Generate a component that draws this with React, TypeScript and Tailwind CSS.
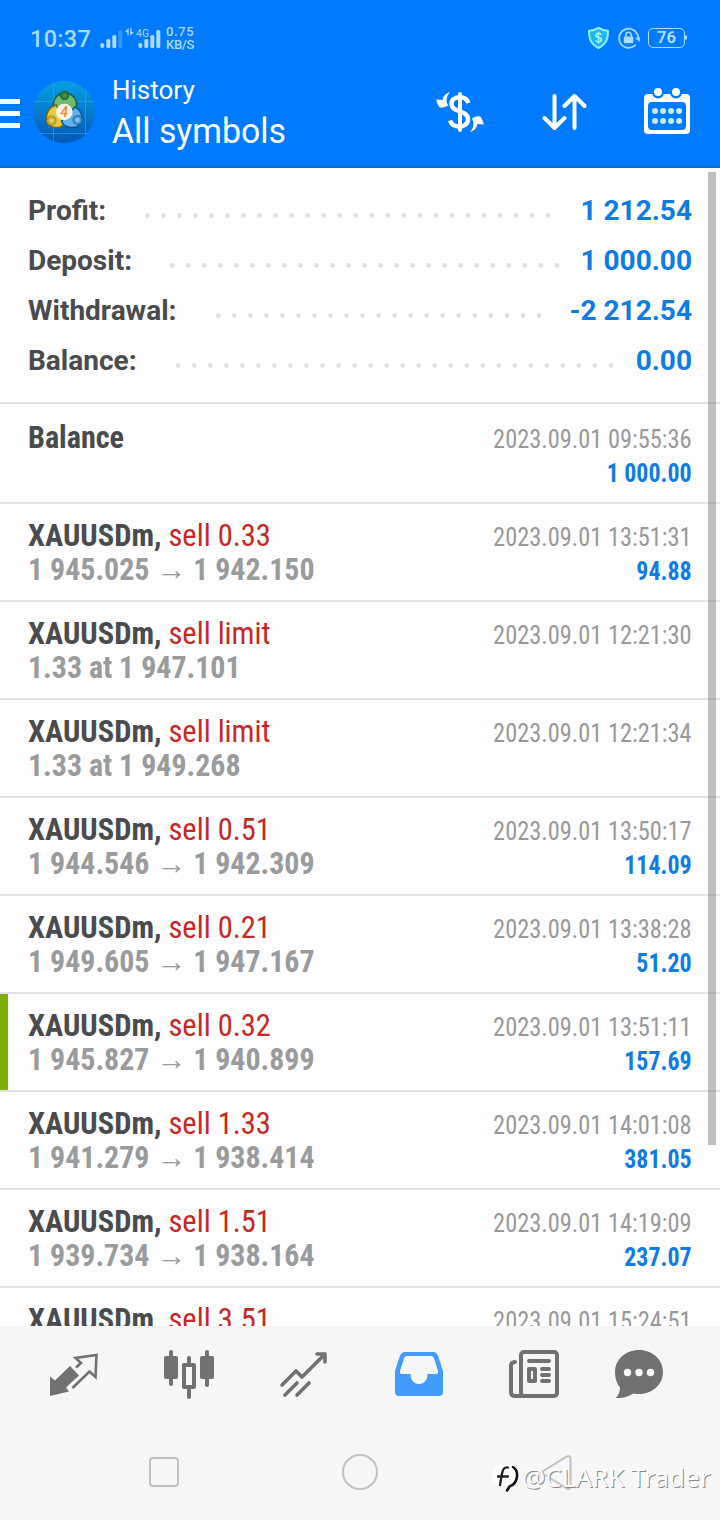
import React from "react";

const COND = "font-['Roboto_Condensed','Roboto',sans-serif] [font-stretch:75%]";

const summary = [
  { label: "Profit:", value: "1 212.54", start: 145, count: 26 },
  { label: "Deposit:", value: "1 000.00", start: 170, count: 25 },
  { label: "Withdrawal:", value: "-2 212.54", start: 216, count: 21 },
  { label: "Balance:", value: "0.00", start: 176, count: 28 },
];

type Deal = { side: string; detail: string; time: string; profit?: string; mark?: boolean };

const deals: Deal[] = [
  { side: "sell 0.33", detail: "1 945.025 → 1 942.150", time: "2023.09.01 13:51:31", profit: "94.88" },
  { side: "sell limit", detail: "1.33 at 1 947.101", time: "2023.09.01 12:21:30" },
  { side: "sell limit", detail: "1.33 at 1 949.268", time: "2023.09.01 12:21:34" },
  { side: "sell 0.51", detail: "1 944.546 → 1 942.309", time: "2023.09.01 13:50:17", profit: "114.09" },
  { side: "sell 0.21", detail: "1 949.605 → 1 947.167", time: "2023.09.01 13:38:28", profit: "51.20" },
  { side: "sell 0.32", detail: "1 945.827 → 1 940.899", time: "2023.09.01 13:51:11", profit: "157.69", mark: true },
  { side: "sell 1.33", detail: "1 941.279 → 1 938.414", time: "2023.09.01 14:01:08", profit: "381.05" },
  { side: "sell 1.51", detail: "1 939.734 → 1 938.164", time: "2023.09.01 14:19:09", profit: "237.07" },
  { side: "sell 3.51", detail: "", time: "2023.09.01 15:24:51" },
];

function StatusBar() {
  return (
    <div className="flex h-[60px] items-start pt-[22px] text-[#a9dcff]">
      <span className="mt-[5px] ml-[30px] w-[70px] text-[23.5px] leading-6 font-medium tracking-[0.3px]">10:37</span>
      <svg className="mt-[4px] h-[26px] w-[62px]" viewBox="0 0 62 26" fill="#a9dcff">
        <rect x="0.3" y="17" width="4" height="5" rx="2" />
        <rect x="6.3" y="13" width="4" height="9" rx="1.5" />
        <rect x="12.3" y="9" width="4" height="13" rx="1.5" />
        <rect x="18.3" y="4" width="4" height="18" rx="1.5" opacity="0.3" />
        <path d="M25 5.500 28.600 2.200v7.300h-1.200V6.500zM33.800 6.500 30.200 9.500V2.200h1.200v3.300z" />
        <rect x="38.300" y="17" width="4" height="5" rx="2" />
        <rect x="44.300" y="13" width="4" height="9" rx="1.500" />
        <rect x="50.300" y="9" width="4" height="13" rx="1.500" />
        <rect x="56.300" y="4" width="4" height="18" rx="1.500" />
        <text x="36" y="11" fontSize="10.500" fontFamily="Roboto">4G</text>
      </svg>
      <div className="mt-[4px] ml-[4px] text-[13px] leading-[12.500px] font-medium">
        <div className="tracking-[0.6px]">0.75</div>
        <div className="tracking-[-0.3px]">KB/S</div>
      </div>
      <div className="mt-[4px] mr-[33px] ml-auto flex items-start">
        <svg className="h-6 w-[23px]" viewBox="0 0 23 24">
          <path d="M11.500 1.800c3 2 6 2.900 9.500 2.900 0 8-1.500 13.500-9.500 17.300C3.500 18.200 2 12.700 2 4.700c3.500 0 6.500-.9 9.500-2.900z" fill="#20b4f0" stroke="#8ff0f4" strokeWidth="2" strokeLinejoin="round" />
          <path d="M14.300 8.700c-.6-1-1.600-1.400-2.800-1.400-3.800 0-3.600 4 0 4.200 3.800.2 3.800 4.400 0 4.400-1.400 0-2.500-.6-3-1.600M11.500 5.800v11.700" fill="none" stroke="#a8fbff" strokeWidth="1.400" />
        </svg>
        <svg className="ml-[7px] h-6 w-6" viewBox="0 0 24 24" fill="none" stroke="#a9dcff" strokeWidth="1.700">
          <path d="M17.500 19.900A9.600 9.600 0 1 1 21.200 11M17.500 19.900l1.300-1.200" />
          <path d="m18 12 4.800-1v5z" fill="#a9dcff" stroke="none" />
          <rect x="6.800" y="10.500" width="9.500" height="6.800" rx="1" fill="#a9dcff" stroke="none" />
          <path d="M8.800 10.500V9a2.750 2.750 0 0 1 5.500 0v1.500" />
        </svg>
        <div className="mt-[2px] ml-[7px] flex h-5 w-[37px] items-center justify-center rounded-[5px] border border-[#a9dcff] text-[16.5px] leading-[18px] font-bold">76</div>
        <div className="mt-[9px] h-[5px] w-[2px] rounded-r bg-[#a9dcff]" />
      </div>
    </div>
  );
}

function AppLogo() {
  return (
    <svg className="h-16 w-16" viewBox="0 0 64 64">
      <defs>
        <linearGradient id="disc" x1="0" y1="0" x2="0" y2="1">
          <stop offset="0" stopColor="#089fe3" />
          <stop offset="1" stopColor="#0457b8" />
        </linearGradient>
        <radialGradient id="green"><stop offset="0" stopColor="#4f9f52" /><stop offset="1" stopColor="#17672f" /></radialGradient>
        <radialGradient id="gold"><stop offset="0" stopColor="#f7e77a" /><stop offset="1" stopColor="#a88a10" /></radialGradient>
        <radialGradient id="blue"><stop offset="0" stopColor="#9fe0ff" /><stop offset="1" stopColor="#1468b8" /></radialGradient>
      </defs>
      <circle cx="32" cy="32" r="31" fill="url(#disc)" />
      <path d="M21.500 3v58M53.500 9v46M2 21.500h60M8 53.500h48" stroke="#38a6e6" strokeWidth="1" opacity="0.6" />
      <path d="M33 13c7 0 12 6 11.500 12 -.5 6-5 9-11.500 9s-11-3-11.500-9C21 19 26 13 33 13z" fill="#6fbb72" stroke="#1a6238" strokeWidth="1.500" />
      <path d="M24 25c-7 2-10 8-9.500 14 .5 5 4.500 8.500 10 8.500 5 0 8-2.500 8-6.500z" fill="#e3cb42" stroke="#77681c" strokeWidth="1.500" />
      <path d="M43 27c5 2 8 8 6.500 14-1.500 5-6 7-11 6.500-5-.5-8-3-9-6.500z" fill="#5eb2e8" stroke="#125293" strokeWidth="1.500" />
      <circle cx="32.500" cy="15.500" r="4.700" fill="url(#green)" />
      <circle cx="19.500" cy="40.500" r="5" fill="url(#gold)" />
      <circle cx="45.500" cy="40" r="5" fill="url(#blue)" />
      <circle cx="32.300" cy="32" r="8.300" fill="#f7f4ec" />
      <text x="32" y="37" textAnchor="middle" fontSize="14" fontWeight="500" fontStyle="italic" fontFamily="Roboto" fill="#ef8838">4</text>
    </svg>
  );
}

function Header() {
  return (
    <header className="h-[168px] shrink-0 border-b-2 border-[#0c6fc8] bg-[#007aff]">
      <StatusBar />
      <div className="flex items-start">
        <div className="mt-[39px] flex w-5 flex-col gap-[7px]">
          <div className="h-[5px] bg-white" />
          <div className="h-[5px] bg-white" />
          <div className="h-[5px] bg-white" />
        </div>
        <div className="mt-5 ml-3"><AppLogo /></div>
        <div className="mt-[14px] ml-4 text-white">
          <div className="text-[26px] leading-[32px]">History</div>
          <div className="mt-[4px] origin-left scale-x-[0.98] text-[34.5px] leading-[42px]">All symbols</div>
        </div>
        <div className="mt-[28px] mr-[29px] ml-auto flex items-start">
          <svg className="h-[48px] w-[48px]" viewBox="0 0 48 48" fill="none">
            <path d="M32.500 15c-1.500-4-4.500-5.700-8.500-5.700-5 0-8.500 2.700-8.500 6.500 0 9.500 16.500 5.500 16.500 15.500 0 4.500-3.500 7.300-8.500 7.300-4.500 0-8-1.800-9.500-6" stroke="#fff" strokeWidth="4.500" />
            <path d="M24 6v36" stroke="#fff" strokeWidth="4" strokeLinecap="round" />
            <path d="M14 4C9.500 5.500 7 8 6.500 12L.3 11.500C1 15 2 17.500 3.800 19.500c3 .5 5.500-.3 8.200-2L10.500 13.500C10.500 9.500 11.500 7 14 4z" fill="#fff" />
            <path d="M34 44c4.500-1.500 7-4 7.500-8l6.200.5c-.7-3.500-1.700-6-3.500-8-3-.5-5.500.3-8.200 2l1.500 4c0 4-1 6.500-3.500 9.500z" fill="#fff" />
          </svg>
          <svg className="ml-[58px] h-[48px] w-[46px]" viewBox="0 0 46 48" fill="none" stroke="#fff" strokeWidth="4" strokeLinecap="round" strokeLinejoin="round">
            <path d="M12.500 8v32M2.500 30l10 10 10-10M32.500 40V8M22.500 18l10-10 10 10" />
          </svg>
          <svg className="ml-[55px] h-[48px] w-[48px]" viewBox="0 0 48 48">
            <rect x="1" y="6" width="46" height="40" rx="4" fill="#fff" />
            <rect x="5" y="14" width="38" height="28" rx="4" fill="#007aff" />
            <circle cx="15" cy="4.500" r="6" fill="#007aff" />
            <circle cx="33" cy="4.500" r="6" fill="#007aff" />
            <circle cx="15" cy="4" r="4" fill="#fff" />
            <circle cx="33" cy="4" r="4" fill="#fff" />
            {[12, 20, 28, 36].map((x) => [23, 33].map((y) => <circle key={`${x}-${y}`} cx={x} cy={y} r="3" fill="#c4ecff" />))}
          </svg>
        </div>
      </div>
    </header>
  );
}

function Dots({ count }: { count: number }) {
  return (
    <svg className="mt-[8px] h-[5px]" width={count * 16.03} height="5">
      {Array.from({ length: count }, (_, i) => (
        <circle key={i} cx={2.3 + i * 16.03} cy="2.500" r="2.400" fill="#e0e0e0" />
      ))}
    </svg>
  );
}

function DealRow({ deal }: { deal: Deal }) {
  return (
    <div className={`flex h-[98px] shrink-0 border-b-2 border-[#e2e2e2] ${COND}`}>
      <div className={deal.mark ? "w-2 bg-[#7fb00a]" : "w-2"} />
      <div className="ml-5 pt-[14px] text-[32px] leading-[34px] font-bold whitespace-pre">
        <div className="origin-left scale-x-[0.952] text-[#4a4b4d]">XAUUSDm, <span className="font-normal text-[#c62828]">{deal.side}</span></div>
        <div className="origin-left scale-x-[0.935] text-[#999b9c]">{deal.detail}</div>
      </div>
      <div className="mr-7 ml-auto pt-[16px] text-right text-[26px] leading-[34px]">
        <div className="origin-right scale-x-[0.938] text-[#999]">{deal.time}</div>
        <div className="origin-right scale-x-[0.918] font-bold text-[#0f7be3]">{deal.profit}</div>
      </div>
    </div>
  );
}

function TabBar() {
  return (
    <nav className="flex h-[98px] items-start bg-[#f6f6f6] pt-6 pl-[49px]">
      <svg className="h-[48px] w-[50px]" viewBox="0 0 50 48">
        <path d="M21 16 30 25.500 17 37.500 20 41.500 1 46V26.500l5 4z" fill="#717171" />
        <path d="m27 17.500 5-4.500-5.500-5L47.500 5 46.500 27l-6-5.500L23.500 38" fill="none" stroke="#717171" strokeWidth="2.600" />
      </svg>
      <svg className="ml-[64px] h-[50px] w-[52px]" viewBox="0 0 52 50" fill="#717171">
        <rect x="1" y="6" width="14" height="23" rx="2" /><rect x="6" y="0" width="4" height="36" rx="2" />
        <rect x="37" y="6" width="14" height="23" rx="2" /><rect x="42" y="0" width="4" height="37" rx="2" />
        <rect x="24" y="6" width="4" height="43" rx="2" /><rect x="19" y="13" width="14" height="26" rx="2" />
        <rect x="23" y="17" width="6" height="18" fill="#f5f6f6" />
      </svg>
      <svg className="ml-[64px] h-[48px] w-[50px]" viewBox="0 0 50 48" fill="none" stroke="#717171" strokeWidth="3.600" strokeLinecap="round" strokeLinejoin="round">
        <path d="M3 35 17 21l6 6L46 4M38 4h8v8M6 45l12-12M18 45l12-12" />
      </svg>
      <svg className="ml-[65px] h-[48px] w-[50px]" viewBox="0 0 50 48">
        <path d="M11 2h28c3 0 4.500 2 5.500 5L49 21v21c0 2.500-1.500 4-4 4H5c-2.500 0-4-1.500-4-4V21L5.500 7C6.500 4 8 2 11 2z" fill="#439bfc" />
        <path d="M13 6h24c1.500 0 2.300.7 3 2.500L44 21c.3 2-.3 3-2 3h-8.500c0 5.500-3 10-8.500 10s-8.500-4.500-8.500-10H8c-1.700 0-2.300-1-2-3l4-12.500C10.700 6.700 11.500 6 13 6z" fill="#f7f7f7" />
      </svg>
      <svg className="ml-[64px] h-[48px] w-[52px]" viewBox="0 0 52 48" fill="none" stroke="#717171" strokeWidth="4" strokeLinecap="round">
        <rect x="13" y="2" width="36" height="44" rx="3" />
        <path d="M7 12c-2.500 0-4 1.500-4 4v26c0 2.500 1.500 4 4 4h10M21 11h20M34 19h7M34 25h7M34 31h7" />
        <rect x="21" y="19" width="6" height="12" strokeLinejoin="round" />
      </svg>
      <svg className="ml-[54px] h-[48px] w-[50px]" viewBox="0 0 50 48">
        <path d="M25 0c13.500 0 24 9.600 24 22S38.500 44 25 44c-2 0-3.800-.2-5.500-.6C14 47 8 48 1.500 48 4.500 45.500 6 42 6 37.500 2.500 33.500 1 28 1 22 1 9.600 11.500 0 25 0z" fill="#717171" />
        <circle cx="13.500" cy="22.500" r="3.700" fill="#f7f7f7" /><circle cx="25" cy="22.500" r="3.700" fill="#f7f7f7" /><circle cx="36.500" cy="22.500" r="3.700" fill="#f7f7f7" />
      </svg>
    </nav>
  );
}

export default function App() {
  return (
    <div className="flex h-[1520px] w-[720px] flex-col overflow-hidden bg-white font-['Roboto',sans-serif]">
      <Header />
      <main className="relative h-[1158px] shrink-0 overflow-hidden bg-[#fefefe]">
        <section className="h-[236px] border-b-2 border-[#e2e2e2] pt-[18px]">
          {summary.map((row) => (
            <div key={row.label} className="flex h-[50px] items-center text-[28px] leading-[50px] font-bold">
              <span className="pl-7 text-[#4a4b4d]" style={{ width: row.start }}>{row.label}</span>
              <Dots count={row.count} />
              <span className="mr-7 ml-auto text-[#0f7be3]">{row.value}</span>
            </div>
          ))}
        </section>
        <div className={`flex h-[100px] border-b-2 border-[#e2e2e2] px-7 pt-4 leading-[34px] ${COND}`}>
          <div className="origin-left scale-x-[0.942] text-[32px] font-bold text-[#4a4b4d]">Balance</div>
          <div className="ml-auto pt-[2px] text-right text-[26px]">
            <div className="origin-right scale-x-[0.938] text-[#999]">2023.09.01 09:55:36</div>
            <div className="origin-right scale-x-[0.918] font-bold text-[#0f7be3]">1 000.00</div>
          </div>
        </div>
        {deals.map((deal, i) => <DealRow key={i} deal={deal} />)}
        <div className="absolute top-[4px] right-[4px] h-[973px] w-2 bg-[#7f7f7f]/50" />
      </main>
      <TabBar />
      <footer className="relative flex h-[96px] items-start bg-[#f7f7f7] pt-[29px]">
        <div className="mt-[4px] ml-[149px] h-[30px] w-[30px] rounded-[4px] border-2 border-[#c2c2c2]" />
        <div className="mt-[1px] ml-[163px] h-[36px] w-[36px] rounded-full border-2 border-[#c2c2c2]" />
        <svg className="mt-[1px] ml-[164px] h-[37px] w-[32px]" viewBox="0 0 32 37" fill="none" stroke="#c2c2c2" strokeWidth="2">
          <path d="M2 16.500 25 2.500c2-1 3.500-.2 3.500 2v28c0 2.500-1.500 3.200-3.500 2.100L2 20.500c-1.500-1-1.500-3 0-4z" />
        </svg>
        <div className="absolute top-[35px] left-[492px] flex items-center whitespace-nowrap">
          <svg className="h-[36px] w-[30px]" viewBox="0 0 30 36" fill="none" strokeLinecap="round">
            <rect x="0" y="6" width="24" height="20" rx="9" fill="#fff" />
            <path d="M16 8.500c-3.500-.8-5 1.500-6 6L8 26M6 17.500h10" stroke="#222" strokeWidth="2.300" />
            <path d="M21 8c6.500 4 5 17-3.500 19.500l-2.500 4" stroke="#111" strokeWidth="2.600" />
          </svg>
          <span className="font-['Noto_Sans',sans-serif] text-[26px] leading-[36px] text-[#fcfcfc] [text-shadow:1px_1px_0_#8a8a8a]">@CLARK Trader</span>
        </div>
      </footer>
    </div>
  );
}
